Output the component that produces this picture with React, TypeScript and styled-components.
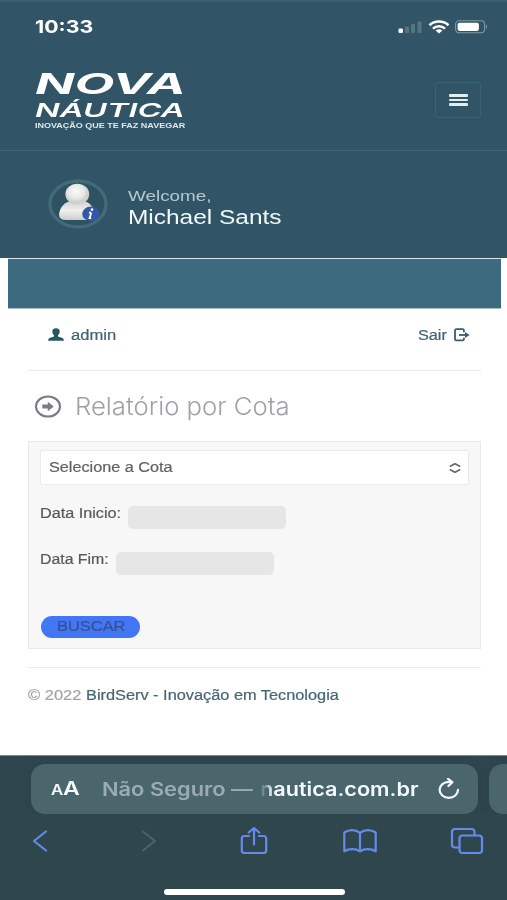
import React, { useLayoutEffect, useRef, useState } from "react";
import styled, { createGlobalStyle } from "styled-components";

const Global = createGlobalStyle`
  * { box-sizing: border-box; }
  body { margin: 0; background: #fff; font-family: "Liberation Sans", Arial, sans-serif; }
`;

const FitBox = styled.span<{ $w: number; $size: number }>`
  display: block;
  flex: none;
  width: ${(p) => p.$w}px;
  font-size: ${(p) => p.$size}px;
  line-height: 1.2;
  text-align: left;
  white-space: nowrap;
`;
const FitInner = styled.span`
  display: inline-block;
  vertical-align: top;
  transform-origin: 0 50%;
`;

type FitProps = { w: number; size: number; children: React.ReactNode; className?: string };

/** Wide-set text: stretches its glyphs horizontally to fill the width w. */
function Fit({ w, size, children, className }: FitProps) {
  const ref = useRef<HTMLSpanElement>(null);
  const [scale, setScale] = useState(1);
  useLayoutEffect(() => {
    if (ref.current) setScale(w / ref.current.offsetWidth);
  }, [w, size]);
  return (
    <FitBox $w={w} $size={size} className={className}>
      <FitInner ref={ref} style={{ transform: `scaleX(${scale})` }}>{children}</FitInner>
    </FitBox>
  );
}

const Screen = styled.div`
  width: 507px;
  height: 900px;
  display: flex;
  flex-direction: column;
  overflow: hidden;
  background: #fff;
`;
const Header = styled.header`
  height: 258px;
  background: #315566;
  border-top: 2px solid #3c6070;
`;
const StatusBar = styled.div`
  height: 50px;
  padding: 0 18px 0 35px;
  display: flex;
  align-items: center;
  justify-content: space-between;
`;
const Time = styled(Fit)`
  font-family: Inter, sans-serif;
  font-weight: 700;
  color: #fff;
`;
const StatusIcons = styled.div`
  display: flex;
  align-items: center;
  gap: 5px;
`;
const Brand = styled.div`
  height: 99px;
  padding: 0 26px 0 35px;
  display: flex;
  justify-content: space-between;
  border-bottom: 1px solid #426675;
`;
const Logo = styled.div`
  padding-top: 16px;
  color: #fff;
  font-family: Inter, sans-serif;
  font-style: italic;
`;
const LogoTop = styled(Fit)`
  height: 31px;
  line-height: 31px;
  font-weight: 700;
`;
const LogoMid = styled(Fit)`
  height: 22px;
  line-height: 22px;
  font-weight: 600;
`;
const LogoTag = styled(Fit)`
  height: 9px;
  line-height: 9px;
  font-family: "Liberation Sans", sans-serif;
  font-style: normal;
  font-weight: 700;
  color: #dfe9ec;
`;
const MenuButton = styled.button`
  margin-top: 30px;
  width: 46px;
  height: 36px;
  padding: 0;
  display: flex;
  flex-direction: column;
  gap: 2px;
  align-items: center;
  justify-content: center;
  background: transparent;
  border: 1px solid #3c6370;
  border-radius: 3px;
`;
const MenuLine = styled.span`
  width: 19px;
  height: 2.6px;
  border-radius: 1px;
  background: #e2eff0;
`;
const Profile = styled.div`
  height: 106px;
  padding-left: 48px;
  display: flex;
  align-items: center;
  gap: 20px;
`;
const ProfileText = styled.div`
  padding-top: 8px;
  display: flex;
  flex-direction: column;
`;
const Welcome = styled(Fit)`
  height: 18px;
  color: #b3c9d2;
`;
const UserName = styled(Fit)`
  color: #f1f8fa;
`;
const Band = styled.div`
  height: 51px;
  margin: 0 6px 0 8px;
  background: #3d6a7f;
  border-top: 1px solid #d9e3e8;
  border-bottom: 1px solid #a8bdc7;
`;
const Content = styled.main`
  flex: 1;
  padding: 0 26px 0 28px;
  display: flex;
  flex-direction: column;
  -webkit-text-stroke: 0.2px currentColor;
`;
const UserNav = styled.nav`
  height: 62px;
  padding: 0 11px 9px 20px;
  display: flex;
  align-items: center;
  justify-content: space-between;
  color: #406473;
  border-bottom: 1px solid #e9ebed;
`;
const NavItem = styled.div`
  display: flex;
  align-items: center;
  gap: 7px;
`;
const TitleRow = styled.div`
  height: 70px;
  padding-left: 6px;
  display: flex;
  align-items: center;
  gap: 13px;
`;
const Title = styled(Fit)`
  padding-top: 2px;
  font-family: Inter, sans-serif;
  font-weight: 300;
  color: #a0a1a8;
  -webkit-text-stroke: 0;
`;
const Panel = styled.form`
  height: 208px;
  padding: 8px 11px 0;
  background: #f7f7f7;
  border: 1px solid #e9e9e9;
`;
const SelectBox = styled.div`
  height: 35px;
  padding: 0 7px 0 8px;
  display: flex;
  align-items: center;
  justify-content: space-between;
  background: #fff;
  border: 1px solid #ebebeb;
  border-radius: 2px;
  color: #606264;
`;
const Field = styled.label<{ $gap: number }>`
  height: 24px;
  margin-top: ${(p) => p.$gap}px;
  display: flex;
  gap: 7px;
  color: #56585a;
`;
const DateInput = styled.span`
  margin-top: 1px;
  width: 158px;
  height: 23px;
  border-radius: 5px;
  background: #e6e6e6;
`;
const Submit = styled.button`
  margin: 41px 0 0 1px;
  width: 99px;
  height: 22px;
  padding: 0;
  display: flex;
  align-items: center;
  justify-content: center;
  border: 0;
  border-radius: 11px;
  background: #4176f5;
  color: #38518f;
  font-family: inherit;
`;
const Footer = styled.footer`
  margin-top: 18px;
  padding-top: 19px;
  display: flex;
  gap: 5px;
  border-top: 1px solid #ececec;
  color: #a2a4a5;
`;
const FooterLink = styled(Fit)`
  color: #456773;
`;
const BrowserBar = styled.div`
  height: 145px;
  background: #2f464d;
  border-top: 1px solid #778a91;
`;
const Addresses = styled.div`
  height: 58px;
  padding: 8px 0 0 31px;
  display: flex;
  gap: 11px;
  overflow: hidden;
`;
const AddressPill = styled.div`
  flex: none;
  width: 447px;
  height: 50px;
  padding: 0 18px 0 20px;
  display: flex;
  align-items: center;
  background: #4b656c;
  border-radius: 14px;
  box-shadow: 0 2px 8px #293f4688;
  font-family: Inter, sans-serif;
  font-weight: 600;
  color: #f3fafb;
`;
const TextSize = styled.div`
  width: 51px;
  display: flex;
  align-items: baseline;
`;
const Insecure = styled(Fit)`
  color: #9aacb1;
`;
const Domain = styled(Fit)`
  margin-left: 7px;
  mask-image: linear-gradient(90deg, transparent 0, #000 13px);
`;
const Reload = styled.svg`
  margin-left: 19px;
`;
const Toolbar = styled.div`
  height: 54px;
  padding: 0 23px;
  display: flex;
  align-items: center;
  justify-content: space-between;
`;
const ToolButton = styled.div`
  width: 34px;
  display: flex;
  justify-content: center;
  color: #658aea;

  svg {
    flex: none;
    fill: none;
    stroke: currentColor;
    stroke-width: 2.2;
    stroke-linecap: round;
    stroke-linejoin: round;
  }
`;
const DisabledTool = styled(ToolButton)`
  padding-left: 5px;
  color: #4c6269;
`;
const HomeIndicator = styled.div`
  width: 181px;
  height: 6px;
  margin: 21px 0 0 164px;
  border-radius: 3px;
  background: #fff;
`;

const Signal = () => (
  <svg width="25" height="14" viewBox="0 0 25 14">
    <rect x="0.5" y="8.5" width="4.5" height="4.5" rx="1.3" fill="#fff" />
    <rect x="7" y="6.5" width="4" height="6.5" rx="1" fill="#547681" />
    <rect x="13" y="4" width="4" height="9" rx="1" fill="#547681" />
    <rect x="19.5" y="1.5" width="4" height="11.5" rx="1" fill="#547681" />
  </svg>
);
const Wifi = () => (
  <svg width="22" height="14" viewBox="0 0 22 14" fill="none" stroke="#fff" strokeWidth="2.5">
    <path d="M1.5 5.2C6.8 0.4 15.2 0.4 20.5 5.2" />
    <path d="M4.9 8.6C8.5 5.5 13.5 5.5 17.1 8.6" />
    <path d="M7.6 10.5Q11 8 14.4 10.5L11 13.5Z" fill="#fff" stroke="none" />
  </svg>
);
const Battery = () => (
  <svg width="34" height="14" viewBox="0 0 34 14">
    <rect x="0.6" y="0.8" width="29" height="12" rx="3.5" fill="none" stroke="#809aa3" strokeWidth="1.1" />
    <rect x="2.6" y="2.7" width="21.3" height="8.2" rx="1.8" fill="#fff" />
    <path d="M31 4.6Q33.4 6.8 31 9Z" fill="#809aa3" />
  </svg>
);
const Avatar = () => (
  <svg width="60" height="50" viewBox="0 0 60 50">
    <defs>
      <radialGradient id="head" cx="45%" cy="38%">
        <stop offset="0" stopColor="#fafafa" />
        <stop offset="0.65" stopColor="#e8e8e8" />
        <stop offset="1" stopColor="#cfcfcf" />
      </radialGradient>
      <linearGradient id="torso" x1="0" y1="0" x2="0" y2="1">
        <stop offset="0" stopColor="#d0d0d0" />
        <stop offset="0.5" stopColor="#f0f0f0" />
        <stop offset="1" stopColor="#cccccc" />
      </linearGradient>
    </defs>
    <ellipse cx="30" cy="25" rx="28" ry="23" fill="#2f5262" stroke="#426a77" strokeWidth="3.4" />
    <path d="M11 35C12 28 17 22 25 22H34C41 22 46 28 47 35Q47 41 39 41H18Q11 41 11 35Z" fill="url(#torso)" />
    <ellipse cx="29.3" cy="15.2" rx="11.9" ry="10.4" fill="url(#head)" />
    <ellipse cx="42.9" cy="34.8" rx="8.7" ry="7.3" fill="#3457aa" />
    <path d="M43.2 33.4L41.7 39.2M40.9 33.6H43.2M40.6 39.2H43.2" stroke="#fff" strokeWidth="1.8" />
    <circle cx="44" cy="30.6" r="1.3" fill="#fff" />
  </svg>
);
const Person = () => (
  <svg width="16" height="13" viewBox="0 0 16 13" fill="#28575f">
    <path d="M8 .2C10.7.2 12 1.7 11.7 4C11.5 5.8 10.6 6.7 10 7.4V8.6L14.5 10Q15.9 10.5 15.9 12.7H.1Q.1 10.5 1.5 10L6 8.6V7.4C5.4 6.7 4.5 5.8 4.3 4C4 1.7 5.3.2 8 .2Z" />
  </svg>
);
const Exit = () => (
  <svg width="16" height="14" viewBox="0 0 16 14" fill="none" stroke="#365e6b" strokeWidth="1.8">
    <path d="M9.9 4.2V2.3Q9.9 1.2 8.7 1.2H2.3Q1 1.2 1 2.4V11.2Q1 12.4 2.3 12.4H8.7Q9.9 12.4 9.9 11.3V9.8" />
    <path d="M5 7H12" />
    <path d="M11 4L15.6 7L11 10Z" fill="#365e6b" stroke="none" />
  </svg>
);
const CircleArrow = () => (
  <svg width="28" height="23" viewBox="0 0 28 23">
    <ellipse cx="14" cy="11.5" rx="12" ry="10" fill="none" stroke="#7b7c88" strokeWidth="2.1" />
    <path d="M8.3 9.6H13.8V6.7L19.8 11.5L13.8 16.3V13.4H8.3Z" fill="#7b7c88" />
  </svg>
);
const Chevrons = () => (
  <svg width="12" height="12" viewBox="0 0 12 12" fill="none" stroke="#66686a" strokeWidth="1.7">
    <path d="M.8 4.6L6 1.8L11.2 4.6M.8 7.4L6 10.2L11.2 7.4" />
  </svg>
);

export default function App() {
  return (
    <Screen>
      <Global />
      <Header>
        <StatusBar>
          <Time w={58} size={18}>10:33</Time>
          <StatusIcons>
            <Signal />
            <Wifi />
            <Battery />
          </StatusIcons>
        </StatusBar>
        <Brand>
          <Logo>
            <LogoTop w={150} size={29}>NOVA</LogoTop>
            <LogoMid w={150} size={18.5}>NÁUTICA</LogoMid>
            <LogoTag w={150} size={7.5}>INOVAÇÃO QUE TE FAZ NAVEGAR</LogoTag>
          </Logo>
          <MenuButton aria-label="Menu">
            <MenuLine />
            <MenuLine />
            <MenuLine />
          </MenuButton>
        </Brand>
        <Profile>
          <Avatar />
          <ProfileText>
            <Welcome w={84} size={15.5}>Welcome,</Welcome>
            <UserName w={154} size={20}>Michael Sants</UserName>
          </ProfileText>
        </Profile>
      </Header>
      <Band />
      <Content>
        <UserNav>
          <NavItem>
            <Person />
            <Fit w={45} size={14}>admin</Fit>
          </NavItem>
          <NavItem>
            <Fit w={29} size={14}>Sair</Fit>
            <Exit />
          </NavItem>
        </UserNav>
        <TitleRow>
          <CircleArrow />
          <Title w={215} size={24.5}>Relatório por Cota</Title>
        </TitleRow>
        <Panel>
          <SelectBox>
            <Fit w={124} size={14}>Selecione a Cota</Fit>
            <Chevrons />
          </SelectBox>
          <Field $gap={20}>
            <Fit w={81} size={14}>Data Inicio:</Fit>
            <DateInput />
          </Field>
          <Field $gap={22}>
            <Fit w={69} size={14}>Data Fim:</Fit>
            <DateInput />
          </Field>
          <Submit type="button">
            <Fit w={68} size={14.5}>BUSCAR</Fit>
          </Submit>
        </Panel>
        <Footer>
          <Fit w={53} size={14}>© 2022</Fit>
          <FooterLink w={253} size={14}>BirdServ - Inovação em Tecnologia</FooterLink>
        </Footer>
      </Content>
      <BrowserBar>
        <Addresses>
          <AddressPill>
            <TextSize>
              <Fit w={12} size={14}>A</Fit>
              <Fit w={17} size={19}>A</Fit>
            </TextSize>
            <Insecure w={151} size={18.5}>Não Seguro —</Insecure>
            <Domain w={159} size={18.5}>nautica.com.br</Domain>
            <Reload width="22" height="22" viewBox="0 0 22 22" fill="none" stroke="#f3fafb" strokeWidth="2.2" strokeLinecap="round" strokeLinejoin="round">
              <path d="M12.5 3.9H11A9.2 8 0 1 0 20 11.8" />
              <path d="M10 .8L14.4 4.1L10.4 8" />
            </Reload>
          </AddressPill>
          <AddressPill />
        </Addresses>
        <Toolbar>
          <ToolButton>
            <svg width="20" height="24" viewBox="0 0 20 24">
              <path d="M16 2.5L4 12L16 21.5" />
            </svg>
          </ToolButton>
          <DisabledTool>
            <svg width="20" height="24" viewBox="0 0 20 24">
              <path d="M4 2.5L16 12L4 21.5" />
            </svg>
          </DisabledTool>
          <ToolButton>
            <svg width="28" height="30" viewBox="0 0 28 30">
              <path d="M9 10H4.5Q1.8 10 1.8 12.5V24.5Q1.8 27 4.5 27H23.5Q26.2 27 26.2 24.5V12.5Q26.2 10 23.5 10H19M14 18.5V2M8.7 6.5L14 2L19.3 6.5" />
            </svg>
          </ToolButton>
          <ToolButton>
            <svg width="36" height="26" viewBox="0 0 36 26">
              <path d="M18 4.8C13.5 1.3 7 1.3 2.3 4.5V23.3C7 20.3 13.5 20.3 18 23.3C22.5 20.3 29 20.3 33.7 23.3V4.5C29 1.3 22.5 1.3 18 4.8V23.3" />
            </svg>
          </ToolButton>
          <ToolButton>
            <svg width="34" height="28" viewBox="0 0 34 28">
              <rect x="9.5" y="8.5" width="22.5" height="17.5" rx="3" />
              <path d="M9.5 20.5H5Q2 20.5 2 17.5V5Q2 2 5 2H21.5Q24.5 2 24.5 5V8.5" />
            </svg>
          </ToolButton>
        </Toolbar>
        <HomeIndicator />
      </BrowserBar>
    </Screen>
  );
}
